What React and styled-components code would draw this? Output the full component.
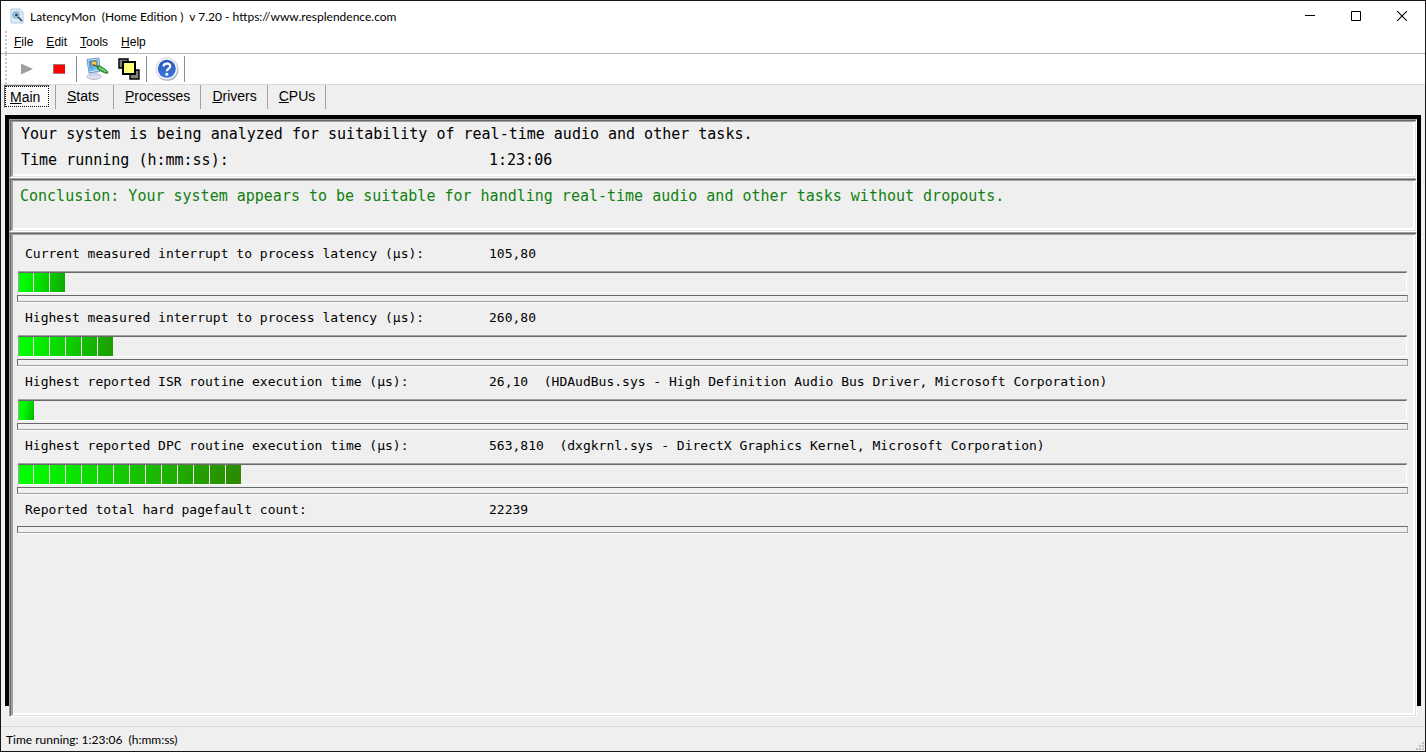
import styled, { createGlobalStyle } from "styled-components";

const GlobalStyle = createGlobalStyle`
* {
  box-sizing: border-box;
}

body {
  margin: 0;
  background: #efefef;
  color: black;
}
`;

const Window = styled.div`
display: flex;
flex-direction: column;
min-height: 100vh;
border: 1px solid #1b1618;
background: #efefef;
font-family: "Liberation Sans", Arial, sans-serif;
`;

const TitleBar = styled.header`
display: flex;
align-items: center;
height: 30px;
padding-left: 8px;
background: white;
`;

const Title = styled.h1`
flex: 1;
margin: 0 0 0 5px;
font-family: Lato, "Segoe UI", sans-serif;
font-size: 12px;
font-weight: normal;
white-space: pre;
`;

const CaptionButton = styled.button`
display: flex;
align-items: center;
justify-content: center;
width: 46px;
height: 28px;
padding: 0;
border: none;
background: none;
`;

const MenuBar = styled.nav`
display: flex;
align-items: center;
height: 22px;
padding-left: 4px;
background: white;
`;

const Grip = styled.div`
align-self: stretch;
width: 2px;
background: repeating-linear-gradient(#c8c8c8 0 2px, white 2px 4px);
`;

const MenuItems = styled.div`
display: flex;
gap: 13px;
padding-left: 7px;
`;

const MenuItem = styled.button`
padding: 0;
border: none;
background: none;
font-family: inherit;
font-size: 12px;
color: black;
`;

const Toolbar = styled.div`
display: flex;
align-items: center;
height: 32px;
padding-left: 4px;
border-top: 1px solid #b4b4b4;
border-bottom: 1px solid #dcdcdc;
background: white;
`;

const ToolButtons = styled.div`
display: flex;
align-items: center;
padding-left: 4px;
`;

const ToolButton = styled.button`
display: flex;
align-items: center;
justify-content: center;
width: 32px;
height: 28px;
padding: 0;
border: none;
background: none;
`;

const ToolSeparator = styled.div`
width: 1px;
height: 26px;
margin: 0 4px 0 1px;
background: #8c8c8c;
`;

const Tabs = styled.div`
display: flex;
height: 30px;
padding-left: 3px;
`;

const Tab = styled.button`
min-width: 58px;
height: 24px;
padding: 0 10px 2px 11px;
border: none;
border-right: 1px solid #a0a0a0;
background: none;
font-family: inherit;
font-size: 14px;
text-align: left;
color: black;
`;

const ActiveTab = styled(Tab)`
min-width: 46px;
height: 23px;
padding: 0 8px 0 5px;
border: 1px solid;
border-color: #696969 white white #696969;
background: #fafafa;
outline: 1px dotted black;
outline-offset: -2px;
`;

const TabDivider = styled.div`
width: 1px;
height: 24px;
margin-left: 5px;
background: #a0a0a0;
`;

const Frame = styled.main`
display: flex;
flex: 1;
flex-direction: column;
margin: 0 4px 20px;
border: 4px solid black;
border-bottom: none;
font-family: "DejaVu Sans Mono", "Lucida Console", monospace;
`;

// the panels run a little past the lower end of the black frame
const Panels = styled.div`
display: flex;
flex: 1;
flex-direction: column;
margin-bottom: -11px;
`;

const Panel = styled.section`
flex: ${(props) => (props.$fill ? "1" : "none")};
border: 1px solid;
border-color: #a0a0a0 white white #a0a0a0;
background: #efefef;
box-shadow:
  inset 1px 1px #696969,
  inset -1px -1px #e3e3e3,
  inset 3px 2px #a0a0a0,
  inset -3px -3px white;
`;

const StatusPanel = styled(Panel)`
padding: 1px 11px 4px;
font-size: 15px;
line-height: 26px;
`;

const ConclusionPanel = styled(Panel)`
padding: 4px 10px 22px;
font-size: 15px;
line-height: 26px;
color: #118011;
`;

const MeterPanel = styled(Panel)`
padding: 5px 8px 0 7px;
`;

const Line = styled.div`
display: flex;
white-space: pre;
`;

const LineLabel = styled.span`
width: 468px;
`;

const Reading = styled(Line)`
padding-left: 8px;
font-size: 13px;
line-height: 32px;
`;

const ReadingLabel = styled.span`
width: 464px;
`;

const Bar = styled.div`
display: flex;
height: 21px;
margin: 2px 1px;
border: 1px solid;
border-color: #696969 white white #a0a0a0;
box-shadow: 0 -1px #a0a0a0;
`;

const BarFill = styled.div`
display: flex;
background: linear-gradient(100deg, #00ff00 5px, ${(props) => props.$end});
`;

const Block = styled.span`
width: 16px;
border-right: 1px solid #efefef;

&:first-child {
  width: 15px;
}

&:last-child {
  width: 15px;
  border-right: none;
}
`;

const Divider = styled.div`
height: 7px;
border: 1px solid;
border-color: #696969 #a0a0a0 #a0a0a0 #696969;
box-shadow: 0 1px white;
`;

const StatusBar = styled.footer`
display: flex;
align-items: center;
justify-content: space-between;
height: 25px;
padding-left: 5px;
border-top: 1px solid #d7d7d7;
font-family: Lato, "Segoe UI", sans-serif;
font-size: 12px;
white-space: pre;
`;

const SizeGrip = styled.svg`
align-self: flex-end;
margin: 0 1px 1px 0;
`;

const menus = ["File", "Edit", "Tools", "Help"];
const tabs = ["Stats", "Processes", "Drivers", "CPUs"];

const readings = [
  {
    label: "Current measured interrupt to process latency (µs):",
    value: "105,80",
    blocks: 3,
    end: "#10a800",
  },
  {
    label: "Highest measured interrupt to process latency (µs):",
    value: "260,80",
    blocks: 6,
    end: "#1c9c00",
  },
  {
    label: "Highest reported ISR routine execution time (µs):",
    value: "26,10  (HDAudBus.sys - High Definition Audio Bus Driver, Microsoft Corporation)",
    blocks: 1,
    end: "#08b400",
  },
  {
    label: "Highest reported DPC routine execution time (µs):",
    value: "563,810  (dxgkrnl.sys - DirectX Graphics Kernel, Microsoft Corporation)",
    blocks: 14,
    end: "#2c8800",
  },
  {
    label: "Reported total hard pagefault count:",
    value: "22239",
  },
];

const Mnemonic = ({ text }) => (
  <>
    <u>{text[0]}</u>
    {text.slice(1)}
  </>
);

const AppIcon = () => (
  <svg width="16" height="16" viewBox="0 0 16 16" aria-hidden="true">
    <path d="M2 1h9l3 3v11H2z" fill="#d9ebf8" stroke="#b4cbde" />
    <path d="M11 1v3h3" fill="#fff" stroke="#b4cbde" />
    <circle cx="7" cy="7" r="3.2" fill="#9cc6e2" stroke="#7ba4c2" />
    <circle cx="7.4" cy="7" r="1.3" fill="#1d3c55" />
    <path d="M9 9l4 4" stroke="#2f3d49" strokeWidth="1.6" />
  </svg>
);

const PlayIcon = () => (
  <svg width="12" height="12" viewBox="0 0 12 12" aria-hidden="true">
    <path d="M0 0.5L12 6L0 11.5z" fill="#a0a0a0" />
  </svg>
);

const StopIcon = () => (
  <svg width="12" height="10" viewBox="0 0 12 10" aria-hidden="true">
    <path d="M0 0h12v10H0z" fill="#a87878" />
    <path d="M1 1h11v8H1z" fill="#ff0000" />
  </svg>
);

const OptionsIcon = () => (
  <svg width="24" height="24" viewBox="0 0 24 24" aria-hidden="true">
    <defs>
      <linearGradient id="screen" x1="0" y1="0" x2="1" y2="1">
        <stop offset="0" stopColor="#2e7fd6" />
        <stop offset="1" stopColor="#8fdcf8" />
      </linearGradient>
    </defs>
    <ellipse cx="9" cy="19.5" rx="7" ry="3" fill="#dfe1ee" stroke="#b9bcd4" />
    <path d="M5 14l8 1 1 4H4z" fill="#cfd3e6" />
    <path d="M2 2.5l12-1.5 1 13-11 2z" fill="#dce8f5" stroke="#6c93bf" />
    <path d="M3.5 3.8l9.4-1.2 1 10.2-9.2 1.8z" fill="url(#screen)" />
    <path d="M6.5 5.5c1-2 4-2 5 0s0 3-2 3-4-1-3-3z" fill="#f5cc4b" stroke="#7c6424" strokeWidth=".7" />
    <path d="M8 7.5l5 2.5" stroke="#744c20" strokeWidth="1.3" />
    <path d="M12 9c2-1 5 1 6 2 2 1 5 3 5 5-2 1-5-1-7-2-2 0-4-2-4-5z" fill="#36a93b" stroke="#15681d" strokeWidth=".8" />
    <path d="M14 10.5l7 4" stroke="#b5ecae" />
  </svg>
);

const WindowsIcon = () => (
  <svg width="22" height="22" viewBox="0 0 22 22" aria-hidden="true">
    <path d="M1 1h9v9H1zM12 12h9v9h-9z" fill="#808080" stroke="black" strokeWidth="1.4" />
    <path d="M5 4h12v12H5z" fill="#ffff78" stroke="black" strokeWidth="2" />
  </svg>
);

const HelpIcon = () => (
  <svg width="24" height="24" viewBox="0 0 24 24" aria-hidden="true">
    <defs>
      <linearGradient id="help" x1="0" y1="0" x2="0" y2="1">
        <stop offset="0" stopColor="#2857b8" />
        <stop offset="1" stopColor="#3979e2" />
      </linearGradient>
    </defs>
    <circle cx="12.4" cy="12.6" r="11" fill="#8c94a4" />
    <circle cx="11.8" cy="11.8" r="11" fill="#f2f4f8" stroke="#c1c8d4" strokeWidth=".6" />
    <circle cx="11.8" cy="11.8" r="9" fill="url(#help)" />
    <path
      d="M8.6 9.4C8.6 5.6 15.2 5.6 15.2 9.2c0 2.4-3.4 2.4-3.4 5"
      fill="none"
      stroke="white"
      strokeWidth="2.3"
    />
    <circle cx="11.8" cy="17.2" r="1.5" fill="white" />
  </svg>
);

const App = () => {
  return (
    <>
      <GlobalStyle />
      <Window>
        <TitleBar>
          <AppIcon />
          <Title>{"LatencyMon  (Home Edition )  v 7.20 - https://www.resplendence.com"}</Title>
          <CaptionButton aria-label="Minimize">
            <svg width="10" height="10" viewBox="0 0 10 10">
              <path d="M0 4.5h10" stroke="black" />
            </svg>
          </CaptionButton>
          <CaptionButton aria-label="Maximize">
            <svg width="10" height="10" viewBox="0 0 10 10">
              <path d="M.5 .5h9v9h-9z" fill="none" stroke="black" />
            </svg>
          </CaptionButton>
          <CaptionButton aria-label="Close">
            <svg width="10" height="10" viewBox="0 0 10 10">
              <path d="M0 0l10 10M10 0L0 10" stroke="black" strokeWidth="1.1" />
            </svg>
          </CaptionButton>
        </TitleBar>

        <MenuBar>
          <Grip />
          <MenuItems>
            {menus.map((menu) => (
              <MenuItem key={menu}>
                <Mnemonic text={menu} />
              </MenuItem>
            ))}
          </MenuItems>
        </MenuBar>

        <Toolbar>
          <Grip />
          <ToolButtons>
            <ToolButton aria-label="Start">
              <PlayIcon />
            </ToolButton>
            <ToolButton aria-label="Stop">
              <StopIcon />
            </ToolButton>
            <ToolSeparator />
            <ToolButton aria-label="Options">
              <OptionsIcon />
            </ToolButton>
            <ToolButton aria-label="Windows">
              <WindowsIcon />
            </ToolButton>
            <ToolSeparator />
            <ToolButton aria-label="Help">
              <HelpIcon />
            </ToolButton>
            <ToolSeparator />
          </ToolButtons>
        </Toolbar>

        <Tabs role="tablist">
          <ActiveTab role="tab" aria-selected="true">
            <Mnemonic text="Main" />
          </ActiveTab>
          <TabDivider />
          {tabs.map((tab) => (
            <Tab key={tab} role="tab" aria-selected="false">
              <Mnemonic text={tab} />
            </Tab>
          ))}
        </Tabs>

        <Frame>
          <Panels>
            <StatusPanel>
              <Line>Your system is being analyzed for suitability of real-time audio and other tasks.</Line>
              <Line>
                <LineLabel>Time running (h:mm:ss):</LineLabel>
                <span>1:23:06</span>
              </Line>
            </StatusPanel>
            <ConclusionPanel>
              Conclusion: Your system appears to be suitable for handling real-time audio and other tasks without dropouts.
            </ConclusionPanel>
            <MeterPanel $fill>
              {readings.map(({ label, value, blocks, end }) => (
                <div key={label}>
                  <Reading>
                    <ReadingLabel>{label}</ReadingLabel>
                    <span>{value}</span>
                  </Reading>
                  {blocks && (
                    <Bar role="progressbar" aria-label={label} aria-valuenow={blocks}>
                      <BarFill $end={end}>
                        {Array.from({ length: blocks }, (_, index) => (
                          <Block key={index} />
                        ))}
                      </BarFill>
                    </Bar>
                  )}
                  <Divider />
                </div>
              ))}
            </MeterPanel>
          </Panels>
        </Frame>

        <StatusBar>
          <span>{"Time running: 1:23:06  (h:mm:ss)"}</span>
          <SizeGrip width="8" height="8" viewBox="0 0 8 8" aria-hidden="true">
            <path d="M6 0h2v2H6zM3 3h2v2H3zM6 3h2v2H6zM0 6h2v2H0zM3 6h2v2H3zM6 6h2v2H6z" fill="#bdbdbd" />
          </SizeGrip>
        </StatusBar>
      </Window>
    </>
  );
};

export default App;
